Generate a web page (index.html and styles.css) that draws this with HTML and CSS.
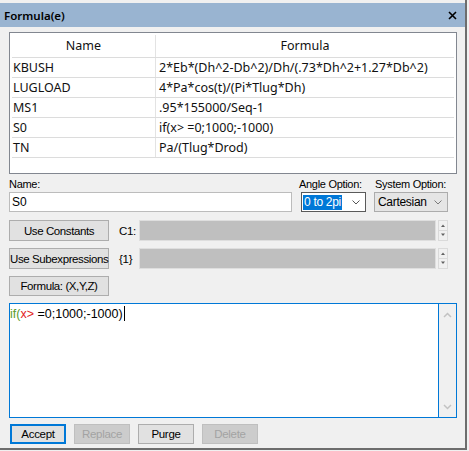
FILE: index.html
```html
<!DOCTYPE html>
<html>
<head>
<meta charset="utf-8">
<link rel="stylesheet" href="styles.css">
</head>
<body>
<div class="window">
  <div class="titlebar">
    <span class="title">Formula(e)</span>
    <svg class="close" width="9" height="9" viewBox="0 0 9 9"><path d="M1 1L8 8M8 1L1 8" stroke="#000" stroke-width="1.6"/></svg>
  </div>
  <div class="content">
    <div class="list">
      <div class="row header"><div class="c1">Name</div><div class="c2">Formula</div></div>
      <div class="row"><div class="c1">KBUSH</div><div class="c2">2*Eb*(Dh^2-Db^2)/Dh/(.73*Dh^2+1.27*Db^2)</div></div>
      <div class="row"><div class="c1">LUGLOAD</div><div class="c2">4*Pa*cos(t)/(Pi*Tlug*Dh)</div></div>
      <div class="row"><div class="c1">MS1</div><div class="c2">.95*155000/Seq-1</div></div>
      <div class="row"><div class="c1">S0</div><div class="c2">if(x&gt; =0;1000;-1000)</div></div>
      <div class="row"><div class="c1">TN</div><div class="c2">Pa/(Tlug*Drod)</div></div>
    </div>

    <div class="opts">
      <div class="f-name">
        <label class="lbl">Name:</label>
        <div class="input">S0</div>
      </div>
      <div class="f-angle">
        <label class="lbl">Angle Option:</label>
        <div class="select focused"><span class="sel">0 to 2pi</span><svg class="chev" width="8" height="5" viewBox="0 0 8 5"><path d="M0.5 0.5L4 4L7.5 0.5" fill="none" stroke="#555" stroke-width="1"/></svg></div>
      </div>
      <div class="f-system">
        <label class="lbl">System Option:</label>
        <div class="select grey"><span class="val">Cartesian</span><svg class="chev" width="8" height="5" viewBox="0 0 8 5"><path d="M0.5 0.5L4 4L7.5 0.5" fill="none" stroke="#7a7a7a" stroke-width="1"/></svg></div>
      </div>
    </div>

    <div class="btnrow first">
      <button class="btn">Use Constants</button>
      <span class="tag">C1:</span>
      <div class="ginput"></div>
      <svg class="spin" width="10" height="21" viewBox="0 0 10 21"><rect x="0.5" y="0.5" width="9" height="20" fill="#f0f0f0" stroke="#dadada"/><line x1="1" y1="10.5" x2="9" y2="10.5" stroke="#dadada"/><path d="M3 7H7L5 4.5Z" fill="#606060"/><path d="M3 13.5H7L5 16Z" fill="#606060"/></svg>
    </div>
    <div class="btnrow">
      <button class="btn">Use Subexpressions</button>
      <span class="tag">{1}</span>
      <div class="ginput"></div>
      <svg class="spin" width="10" height="21" viewBox="0 0 10 21"><rect x="0.5" y="0.5" width="9" height="20" fill="#f0f0f0" stroke="#dadada"/><line x1="1" y1="10.5" x2="9" y2="10.5" stroke="#dadada"/><path d="M3 7H7L5 4.5Z" fill="#606060"/><path d="M3 13.5H7L5 16Z" fill="#606060"/></svg>
    </div>
    <div class="btnrow short">
      <button class="btn">Formula: (X,Y,Z)</button>
    </div>

    <div class="editor">
      <div class="text"><span class="kw">if(</span><span class="var">x&gt;</span> =0;1000;-1000)<span class="caret"></span></div>
      <div class="vscroll">
        <svg width="9" height="6" viewBox="0 0 9 6"><path d="M1 5L4.5 1.5L8 5" fill="none" stroke="#c2c2c2" stroke-width="1.5"/></svg>
        <svg width="9" height="6" viewBox="0 0 9 6"><path d="M1 1L4.5 4.5L8 1" fill="none" stroke="#c2c2c2" stroke-width="1.5"/></svg>
      </div>
    </div>

    <div class="actions">
      <button class="abtn default">Accept</button>
      <button class="abtn disabled">Replace</button>
      <button class="abtn">Purge</button>
      <button class="abtn disabled">Delete</button>
    </div>
  </div>
</div>
</body>
</html>
```
FILE: styles.css
```css
* { box-sizing: border-box; }
html, body { margin: 0; padding: 0; background: #f0f0f0; }

.window {
  width: 467px;
  height: 450px;
  border-right: 2px solid #6d6d6d;
  border-bottom: 2px solid #6d6d6d;
  padding-top: 3px;
  background: #f0f0f0;
}

.titlebar {
  height: 24px;
  background: #99b4d1;
  display: flex;
  align-items: center;
  justify-content: space-between;
  padding: 0 4px 0 4px;
}
.title { font: 600 11.5px "Noto Sans", sans-serif; color: #000; }
.close { margin-right: 4px; }

.content { padding: 5px 0 0 9px; }

.list {
  width: 448px;
  height: 142px;
  border: 1px solid #828790;
  background: #fff;
  padding: 2px 2px 0 2px;
  font: 12.5px "Noto Sans", sans-serif;
  color: #111;
}
.row {
  display: flex;
  height: 20px;
  border-bottom: 1px solid #dcdcdc;
  line-height: 19px;
}
.row.header { height: 23px; line-height: 21px; border-bottom: 1px solid #dcdcdc; }
.c1 { width: 144px; border-right: 1px solid #e3e3e3; padding-left: 1px; white-space: nowrap; }
.c2 { flex: 1; padding-left: 3px; white-space: nowrap; }
.header .c1, .header .c2 { text-align: center; padding-left: 0; }

.lbl {
  display: block;
  height: 14px;
  line-height: 14px;
  font: 11px "Liberation Sans", Arial, sans-serif;
  letter-spacing: -0.3px;
  color: #000;
  white-space: nowrap;
}
.opts { display: flex; margin-top: 4px; }
.f-name { width: 283px; }
.f-angle { width: 65px; margin-left: 9px; }
.f-angle .lbl { margin-left: -2px; }
.f-system { width: 74px; margin-left: 8px; }
.f-system .lbl { margin-left: 1px; }

.input {
  height: 20px;
  border: 1px solid #bcbcbc;
  background: #fff;
  padding-left: 2px;
  font: 12px "Liberation Sans", Arial, sans-serif;
  line-height: 18px;
}

.select {
  height: 20px;
  display: flex;
  align-items: center;
  font: 12px "Liberation Sans", Arial, sans-serif;
  letter-spacing: -0.3px;
}
.select.focused { background: #fff; border: 1px solid #5a5a5a; padding-left: 1px; }
.select.grey { background: #e5e5e5; border: 1px solid #acacac; padding-left: 3px; }
.sel { background: #0078d7; color: #fff; line-height: 15px; padding: 0 1px; }
.chev { margin-left: auto; margin-right: 5px; }

.btnrow { display: flex; align-items: center; margin-top: 7px; height: 21px; }
.btnrow.first { margin-top: 8px; }
.btnrow.short { height: 20px; }
.btn {
  width: 100px;
  height: 100%;
  margin: 0;
  padding: 0;
  background: #e1e1e1;
  border: 1px solid #adadad;
  font: 11.5px "Liberation Sans", Arial, sans-serif;
  letter-spacing: -0.4px;
  color: #000;
  white-space: nowrap;
}
.tag {
  width: 20px;
  margin-left: 10px;
  font: 11.5px "Liberation Sans", Arial, sans-serif;
  letter-spacing: -0.3px;
}
.ginput {
  width: 297px;
  height: 100%;
  background: #bfbfbf;
  border: 1px solid #dedede;
}
.spin { margin-left: 2px; display: block; }

.editor {
  margin-top: 7px;
  width: 448px;
  height: 115px;
  border: 1px solid #0078d7;
  background: #fff;
  display: flex;
}
.text {
  flex: 1;
  padding: 2px 0 0 0;
  font: 12.5px "Liberation Sans", Arial, sans-serif;
  line-height: 14px;
  color: #000;
}
.kw { color: #5c9c2c; }
.var { color: #e21b1b; }
.caret { display: inline-block; width: 1px; height: 15px; background: #000; vertical-align: -3px; margin-left: 1px; }
.vscroll {
  width: 18px;
  border-left: 1px solid #0078d7;
  background: #f0f0f0;
  display: flex;
  flex-direction: column;
  align-items: center;
  justify-content: space-between;
  padding: 8px 0 7px 0;
}
.vscroll svg { display: block; }

.actions { display: flex; gap: 8px; margin-top: 6px; padding-left: 1px; }
.abtn {
  width: 56px;
  height: 20px;
  margin: 0;
  padding: 0;
  background: #e1e1e1;
  border: 1px solid #adadad;
  font: 11.5px "Liberation Sans", Arial, sans-serif;
  letter-spacing: -0.3px;
  color: #000;
}
.abtn.default { border: 2px solid #0078d7; }
.abtn.disabled { background: #cccccc; border-color: #bfbfbf; color: #a3a3a3; }
```
